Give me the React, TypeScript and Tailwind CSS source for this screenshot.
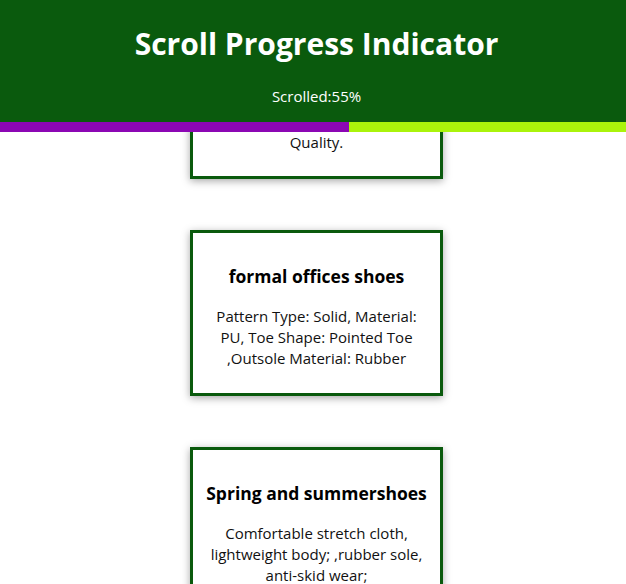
import React from "react";

const cards = [
  {
    title: "formal offices shoes",
    text: "Pattern Type: Solid, Material: PU, Toe Shape: Pointed Toe ,Outsole Material: Rubber",
  },
  {
    title: "Spring and summershoes",
    text: "Comfortable stretch cloth, lightweight body; ,rubber sole, anti-skid wear;",
  },
];

export default function App() {
  const scrolled = 55;

  return (
    <div
      className="h-[584px] overflow-hidden flex flex-col bg-white"
      style={{ fontFamily: '"Open Sans", "Noto Sans", sans-serif' }}
    >
      {/* Header */}
      <header className="bg-[#0a5a0d] text-white flex flex-col items-center pt-[24px] pb-[15px] pl-[7px]">
        <h1 className="text-[30px] font-bold leading-[40px]">
          Scroll Progress Indicator
        </h1>
        <p className="mt-[22px] text-[15px] leading-[21px]">Scrolled:{scrolled}%</p>
      </header>

      {/* Progress bar */}
      <div className="h-[10px] bg-[#aaf40b] flex">
        <div className="h-full bg-[#8c06b4] w-[349px]" />
      </div>

      {/* Cards */}
      <main className="flex-1 overflow-hidden flex flex-col items-center gap-[51px] pl-[7px]">
        <div className="w-[253px] -mt-[10px] pt-[10px] border-[3px] border-t-0 border-[#0a5a0d] bg-white shadow-[0_2px_8px_rgba(0,0,0,0.35)] px-[14px] pb-[23px] text-center text-[15px] leading-[21px] text-[#111]">
          Quality.
        </div>
        {cards.map((c) => (
          <div
            key={c.title}
            className="w-[253px] shrink-0 border-[3px] border-[#0a5a0d] bg-white shadow-[0_2px_8px_rgba(0,0,0,0.35)] px-[14px] py-2.5 text-center"
          >
            <h3 className="-mx-2 mt-[21px] text-[17.5px] font-bold leading-[24px] text-black whitespace-nowrap">
              {c.title}
            </h3>
            <p className="mt-[18px] mb-[14px] text-[15px] leading-[21px] text-[#111]">{c.text}</p>
          </div>
        ))}
      </main>
    </div>
  );
}
